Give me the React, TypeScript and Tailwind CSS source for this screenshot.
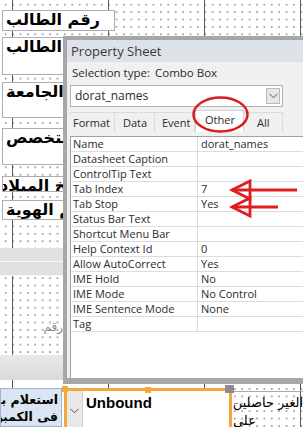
import React from 'react';

const rows: [string, string][] = [
  ['Name', 'dorat_names'],
  ['Datasheet Caption', ''],
  ['ControlTip Text', ''],
  ['Tab Index', '7'],
  ['Tab Stop', 'Yes'],
  ['Status Bar Text', ''],
  ['Shortcut Menu Bar', ''],
  ['Help Context Id', '0'],
  ['Allow AutoCorrect', 'Yes'],
  ['IME Hold', 'No'],
  ['IME Mode', 'No Control'],
  ['IME Sentence Mode', 'None'],
  ['Tag', ''],
];

const tabs = [
  { label: 'Format', cls: 'w-[45px] pl-[3px]' },
  { label: 'Data', cls: 'w-[40px] pl-[8px]' },
  { label: 'Event', cls: 'w-[40px] pl-[7px]' },
  { label: 'Other', cls: 'w-[49px] pl-[9px]' },
  { label: 'All', cls: 'w-[39px] pl-[13px]' },
];

const arabic = "font-['DejaVu_Sans',sans-serif]";

function FieldLabel({ text, h, shift = '' }: { text: string; h: string; shift?: string }) {
  return (
    <div className={`ml-[2px] w-[113px] ${h} shrink-0 overflow-hidden bg-white border border-[#adadad] pl-[3px]`}>
      <div dir="rtl" className={`${arabic} ${shift} whitespace-nowrap text-left text-[16px] font-bold leading-[17px] text-black`}>
        {text}
      </div>
    </div>
  );
}

function Band({ h }: { h: string }) {
  return <div className={`${h} shrink-0 bg-[#e1e1e1] border-b border-[#f7f7f7]`} />;
}

function Chevron({ className }: { className?: string }) {
  return (
    <svg width="9" height="6" viewBox="0 0 9 6" className={className}>
      <path d="M0.5 0.8 L4.5 4.8 L8.5 0.8" fill="none" stroke="#555" strokeWidth="1" />
    </svg>
  );
}

function PropertySheet() {
  return (
    <div className="absolute left-[63px] top-[36px] w-[250px] h-[348px] border-l-4 border-t-4 border-b-[6px] border-[#a7a7a7] bg-[#f0f0f0] flex flex-col font-['Open_Sans',sans-serif] text-[#2b2b2b]">
      <div className="h-[22px] shrink-0 bg-[#dde2e8] pl-[4px] text-[13px] leading-[22px] text-[#3a3a3a]">
        Property Sheet
      </div>
      <div className="pl-[5px] pt-[2px] h-[19px] text-[11.5px] leading-[17px] flex">
        <span className="w-[83px]">Selection type:</span>
        <span>Combo Box</span>
      </div>
      <div className="ml-[3px] mt-[4px] w-[213px] h-[22px] shrink-0 bg-white border border-[#b4b4b4] flex items-center justify-between pl-[4px] pr-[2px]">
        <span className="text-[12px]">dorat_names</span>
        <div className="w-[14px] h-[16px] bg-[#e6e6e6] border border-[#b9b9b9] flex items-center justify-center">
          <Chevron />
        </div>
      </div>
      <div className="ml-[3px] mt-[3px] h-[22px] shrink-0 flex items-end">
        {tabs.map((t) => (
          <div
            key={t.label}
            className={`${t.cls} ${
              t.label === 'Other'
                ? 'h-[22px] bg-white border-x border-t border-[#d4d4d4] leading-[18px]'
                : 'h-[20px] bg-[#f0f0f0] border-t border-r border-[#dadada] leading-[20px]'
            } text-[11px] text-left`}
          >
            {t.label}
          </div>
        ))}
      </div>
      <div className="ml-[3px] mt-[4px] flex-1 bg-white border-l border-t border-[#a0a0a0]">
        {rows.map(([k, v]) => (
          <div key={k} className="h-[15px] flex border-b border-[#dcdcdc] text-[11px] leading-[14px]">
            <div className="w-[127px] shrink-0 pl-[2px] border-r border-[#dcdcdc] whitespace-nowrap overflow-hidden">{k}</div>
            <div className="pl-[3px] whitespace-nowrap">{v}</div>
          </div>
        ))}
      </div>
    </div>
  );
}

function Annotations() {
  return (
    <svg className="absolute left-0 top-0" width="303" height="427" viewBox="0 0 303 427">
      <ellipse cx="220.5" cy="114.5" rx="27" ry="17" fill="none" stroke="#d81e1e" strokeWidth="2.5" />
      <g fill="none" stroke="#de1f1f" strokeWidth="2.8" strokeLinejoin="miter">
        <path d="M297 190 L232 190" />
        <path d="M250 181 L232 190 L250 199 Z" />
        <path d="M278 207 L232 207" />
        <path d="M250 198 L232 207 L250 216 Z" />
      </g>
    </svg>
  );
}

export default function App() {
  return (
    <div className="relative w-[303px] h-[427px] overflow-hidden bg-white bg-[linear-gradient(to_right,#5a5a5a_1px,transparent_1px),radial-gradient(circle,#999_0.6px,transparent_0.9px)] bg-[length:96px_100%,7.4px_7.4px] bg-[position:12px_0,2px_1px]">
      <div className="flex flex-col">
        <div className="h-[10px] shrink-0" />
        <FieldLabel text="رقم الطالب" h="h-[21px]" />
        <div className="h-[6px] shrink-0" />
        <FieldLabel text="اسم الطالب" h="h-[38px]" />
        <div className="h-[7px] shrink-0" />
        <FieldLabel text="الجامعة" h="h-[36px]" />
        <div className="h-[10px] shrink-0" />
        <FieldLabel text="التخصص" h="h-[37px]" />
        <div className="h-[11px] shrink-0" />
        <FieldLabel text="تاريخ الميلاد" h="h-[16px]" shift="ml-[-6px] text-[15px] leading-[15px]" />
        <div className="h-[8px] shrink-0" />
        <FieldLabel text="رقم الهوية" h="h-[20px]" />
        <div className="h-[28px] shrink-0" />
        <Band h="h-[14px]" />
        <Band h="h-[14px]" />
        <div className="h-[46px] shrink-0" />
        <div className="h-[12px] shrink-0 ml-[43px] w-[20px] overflow-hidden">
          <div dir="rtl" className={`${arabic} text-right text-[12px] leading-[11px] text-[#8a8a8a] whitespace-nowrap`}>رقم الطالب</div>
        </div>
        <div className="h-[21px] shrink-0" />
        <div className="h-[25px] shrink-0 bg-[linear-gradient(#e9e9e9,#d9d9d9)]" />
        <div className="h-[8px] shrink-0 bg-white bg-[linear-gradient(to_right,#555_1px,transparent_1px)] bg-[length:96px_100%] bg-[position:12px_0]" />
        <div className="h-[39px] shrink-0 flex">
          <div className="w-[62px] shrink-0 overflow-hidden bg-[#dbe5f1] border border-[#9fb3cc] pr-[3px] pt-[2px]">
            <div dir="rtl" className={`${arabic} whitespace-nowrap text-right text-[12.5px] font-bold leading-[17px] text-black`}>
              <div>استعلام بالرقم</div>
              <div>فى الكمبوبوكس</div>
            </div>
          </div>
          <div className="relative ml-[2px] w-[168px] shrink-0 border-l-[3px] border-r-[3px] border-t-[3px] border-[#f4a63f] bg-white flex">
            <div className="w-[16px] shrink-0 bg-[#e8e8e8] border-r border-[#cfcfcf] flex items-start justify-center pt-[17px]">
              <Chevron />
            </div>
            <div className="pl-[3px] pt-[3px] text-[15px] font-bold leading-[18px] font-['Liberation_Sans',sans-serif] text-black">Unbound</div>
            <div className="absolute left-[-5px] top-[-5px] w-[6px] h-[6px] bg-[#f4a63f]" />
            <div className="absolute left-[78px] top-[-4px] w-[6px] h-[6px] bg-[#f4a63f]" />
            <div className="absolute right-[-5px] top-[-6px] w-[9px] h-[8px] bg-[#8c8c8c]" />
          </div>
          <div className="flex-1 overflow-hidden border-t border-[#a9a9a9] mt-[3px] pl-[1px] pt-[2px]">
            <div dir="rtl" className={`${arabic} text-left text-[13px] leading-[18px] text-black whitespace-nowrap`}>
              <div>الغير حاصلين</div>
              <div>على</div>
            </div>
          </div>
        </div>
      </div>
      <PropertySheet />
      <Annotations />
    </div>
  );
}
